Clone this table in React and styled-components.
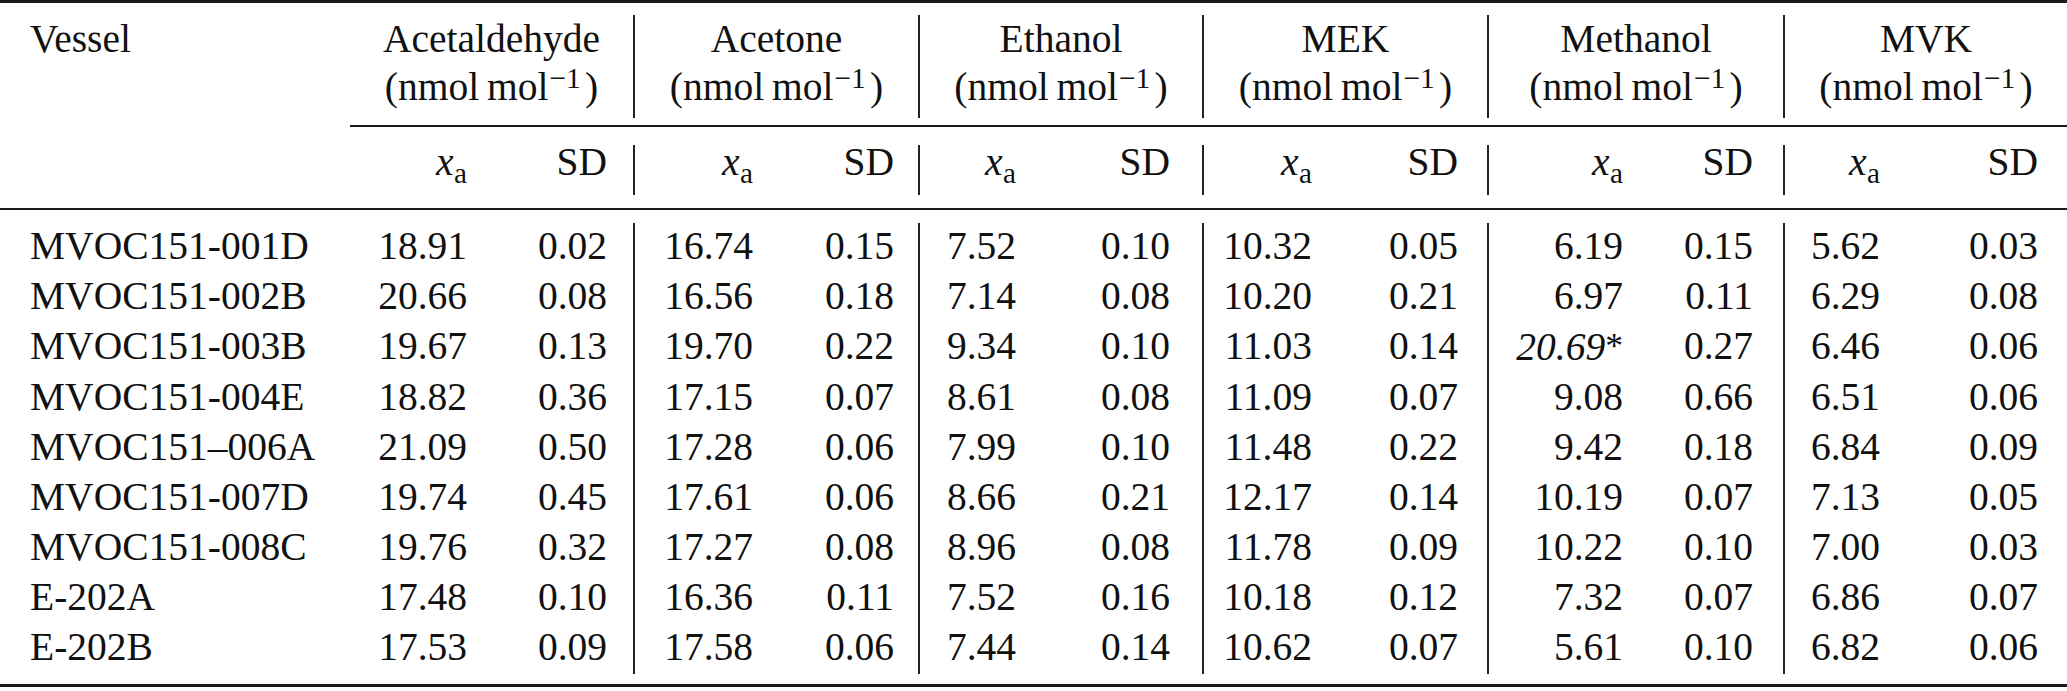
import React from 'react';
import styled, { createGlobalStyle } from 'styled-components';

const GlobalStyle = createGlobalStyle`
  html, body {
    margin: 0;
    padding: 0;
    background: #ffffff;
  }
  body {
    font-family: "Liberation Serif", "Times New Roman", serif;
    color: #111;
  }
`;

const groups = ['Acetaldehyde', 'Acetone', 'Ethanol', 'MEK', 'Methanol', 'MVK'];

// column widths and the right padding that places the right-aligned text
const cols = [
  { w: 350 },
  { w: 140, pr: 23 }, { w: 143, pr: 26 },
  { w: 143, pr: 23 }, { w: 142, pr: 24 },
  { w: 122, pr: 24 }, { w: 162, pr: 32 },
  { w: 134, pr: 24 }, { w: 151, pr: 29 },
  { w: 160, pr: 24 }, { w: 136, pr: 30 },
  { w: 121, pr: 24 }, { w: 163, pr: 29 },
];

const rows = [
  ['MVOC151-001D', '18.91', '0.02', '16.74', '0.15', '7.52', '0.10', '10.32', '0.05', '6.19', '0.15', '5.62', '0.03'],
  ['MVOC151-002B', '20.66', '0.08', '16.56', '0.18', '7.14', '0.08', '10.20', '0.21', '6.97', '0.11', '6.29', '0.08'],
  ['MVOC151-003B', '19.67', '0.13', '19.70', '0.22', '9.34', '0.10', '11.03', '0.14', { v: '20.69', flag: true }, '0.27', '6.46', '0.06'],
  ['MVOC151-004E', '18.82', '0.36', '17.15', '0.07', '8.61', '0.08', '11.09', '0.07', '9.08', '0.66', '6.51', '0.06'],
  ['MVOC151\u2013006A', '21.09', '0.50', '17.28', '0.06', '7.99', '0.10', '11.48', '0.22', '9.42', '0.18', '6.84', '0.09'],
  ['MVOC151-007D', '19.74', '0.45', '17.61', '0.06', '8.66', '0.21', '12.17', '0.14', '10.19', '0.07', '7.13', '0.05'],
  ['MVOC151-008C', '19.76', '0.32', '17.27', '0.08', '8.96', '0.08', '11.78', '0.09', '10.22', '0.10', '7.00', '0.03'],
  ['E-202A', '17.48', '0.10', '16.36', '0.11', '7.52', '0.16', '10.18', '0.12', '7.32', '0.07', '6.86', '0.07'],
  ['E-202B', '17.53', '0.09', '17.58', '0.06', '7.44', '0.14', '10.62', '0.07', '5.61', '0.10', '6.82', '0.06'],
];

// a vertical rule sits left of the x_a column of every group but the first
const hasRule = (i) => i >= 3 && i % 2 === 1;

const Table = styled.table`
  width: 2067px;
  table-layout: fixed;
  border-collapse: separate;
  border-spacing: 0;
  border-top: 3px solid #1a1a1a;
  border-bottom: 3px solid #1a1a1a;
  font-size: 39.5px;
`;

const Col = styled.col`
  width: ${(p) => p.$w}px;
`;

const Gap = styled.td`
  height: ${(p) => p.$h}px;
  padding: 0;
  font-size: 0;
  line-height: 0;
  border-bottom: ${(p) => (p.$rule ? '2px solid #1a1a1a' : 'none')};
`;

const VesselHead = styled.th`
  padding: 0 0 7px 30px;
  text-align: left;
  vertical-align: top;
  font-weight: normal;
  line-height: 48px;
`;

const GroupHead = styled.th`
  padding: 0 0 7px 0;
  text-align: center;
  vertical-align: top;
  font-weight: normal;
  line-height: 48px;
  white-space: nowrap;
  border-left: ${(p) => (p.$rule ? '2px solid #222' : 'none')};
`;

const SubHead = styled.th`
  padding: 0 ${(p) => p.$pr}px 16px 0;
  text-align: right;
  vertical-align: top;
  font-weight: normal;
  line-height: 34px;
  white-space: nowrap;
  border-left: ${(p) => (p.$rule ? '2px solid #222' : 'none')};
`;

const NameCell = styled.td`
  padding: 0 0 4px 30px;
  text-align: left;
  vertical-align: top;
  line-height: 46px;
  white-space: nowrap;
`;

const ValueCell = styled.td`
  padding: 0 ${(p) => p.$pr}px 4px 0;
  text-align: right;
  vertical-align: top;
  line-height: 46px;
  white-space: nowrap;
  border-left: ${(p) => (p.$rule ? '2px solid #222' : 'none')};
`;

const Sup = styled.sup`
  font-size: 0.75em;
  line-height: 0;
  vertical-align: 0.42em;
  margin-left: 0.03em;
  margin-right: 0.14em;
`;

const Var = styled.i`
  font-style: italic;
`;

const Sub = styled.sub`
  font-size: 0.74em;
  line-height: 0;
  vertical-align: -0.26em;
  margin-left: 0.02em;
`;

const Flagged = styled.i`
  font-style: italic;
`;

const Star = styled.span`
  font-style: normal;
  font-size: 0.9em;
  vertical-align: 0.05em;
`;

const Unit = () => (
  <>
    (nmol{'\u2009'}mol<Sup>{'\u2212'}1</Sup>)
  </>
);

const Value = ({ value }) =>
  typeof value === 'string' ? (
    value
  ) : (
    <>
      <Flagged>{value.v}</Flagged>
      <Star>*</Star>
    </>
  );

export default function App() {
  return (
    <>
      <GlobalStyle />
      <Table>
        <colgroup>
          {cols.map((c, i) => (
            <Col key={i} $w={c.w} />
          ))}
        </colgroup>
        <thead>
          <tr>
            <Gap colSpan={13} $h={12} />
          </tr>
          <tr>
            <VesselHead>Vessel</VesselHead>
            {groups.map((g, i) => (
              <GroupHead key={g} colSpan={2} $rule={i > 0}>
                {g}
                <br />
                <Unit />
              </GroupHead>
            ))}
          </tr>
          <tr>
            <Gap $h={7} />
            <Gap colSpan={12} $h={7} $rule />
          </tr>
          <tr>
            <Gap colSpan={13} $h={18} />
          </tr>
          <tr>
            <SubHead $pr={0} />
            {cols.slice(1).map((c, j) => {
              const i = j + 1;
              return (
                <SubHead key={i} $pr={c.pr} $rule={hasRule(i)}>
                  {i % 2 === 1 ? (
                    <>
                      <Var>x</Var>
                      <Sub>a</Sub>
                    </>
                  ) : (
                    'SD'
                  )}
                </SubHead>
              );
            })}
          </tr>
          <tr>
            <Gap colSpan={13} $h={13} $rule />
          </tr>
        </thead>
        <tbody>
          <tr>
            <Gap colSpan={13} $h={13} />
          </tr>
          {rows.map((r) => (
            <tr key={r[0]}>
              <NameCell>{r[0]}</NameCell>
              {r.slice(1).map((v, j) => {
                const i = j + 1;
                return (
                  <ValueCell key={i} $pr={cols[i].pr} $rule={hasRule(i)}>
                    <Value value={v} />
                  </ValueCell>
                );
              })}
            </tr>
          ))}
          <tr>
            <Gap colSpan={13} $h={10} />
          </tr>
        </tbody>
      </Table>
    </>
  );
}
